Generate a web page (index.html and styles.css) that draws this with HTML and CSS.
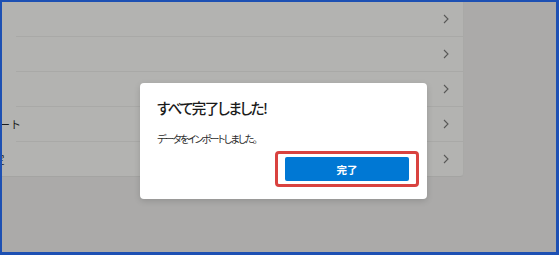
FILE: index.html
```html
<!DOCTYPE html>
<html lang="ja">
<head>
<meta charset="utf-8">
<link rel="stylesheet" href="styles.css">
</head>
<body>
<div class="screen">
  <div class="page">
    <div class="card">
      <div class="row"><span class="label"></span><svg class="chev" width="6" height="10" viewBox="0 0 6 10"><path d="M1 1l4 4-4 4" fill="none" stroke="#585857" stroke-width="1.1"/></svg></div>
      <div class="row"><span class="label"></span><svg class="chev" width="6" height="10" viewBox="0 0 6 10"><path d="M1 1l4 4-4 4" fill="none" stroke="#585857" stroke-width="1.1"/></svg></div>
      <div class="row"><span class="label"></span><svg class="chev" width="6" height="10" viewBox="0 0 6 10"><path d="M1 1l4 4-4 4" fill="none" stroke="#585857" stroke-width="1.1"/></svg></div>
      <div class="row"><span class="label">データのインポート</span><svg class="chev" width="6" height="10" viewBox="0 0 6 10"><path d="M1 1l4 4-4 4" fill="none" stroke="#585857" stroke-width="1.1"/></svg></div>
      <div class="row"><span class="label label-short">プロファイル設定</span><svg class="chev" width="6" height="10" viewBox="0 0 6 10"><path d="M1 1l4 4-4 4" fill="none" stroke="#585857" stroke-width="1.1"/></svg></div>
    </div>
  </div>
  <div class="dialog">
    <h2 class="title">すべて完了しました!</h2>
    <p class="message">データをインポートしました。</p>
    <div class="actions">
      <div class="highlight"><button class="done">完了</button></div>
    </div>
  </div>
  <div class="frame"></div>
</div>
</body>
</html>
```

FILE: styles.css
```css
html, body {
  margin: 0;
  padding: 0;
}
body {
  font-family: "Noto Sans CJK JP", "Noto Sans", sans-serif;
  background: #abaaa9;
}
.screen {
  position: relative;
  width: 559px;
  height: 255px;
  overflow: hidden;
  background: #abaaa9;
}
.page {
  padding-top: 1px;
}
.card {
  width: 543px;
  margin-left: -80px;
  background: #b3b3b1;
  border-right: 1px solid #a9a9a7;
  border-bottom: 1px solid #a4a4a2;
  border-radius: 0 0 4px 0;
}
.row {
  height: 34px;
  display: flex;
  align-items: center;
  justify-content: space-between;
  padding: 0 14px 0 0;
  margin-left: 96px;
  border-top: 1px solid #a9a9a7;
}
.row:first-child {
  border-top-color: transparent;
}
.label {
  margin-left: -94px;
  font-size: 11px;
  color: #1c1c1c;
  white-space: nowrap;
}
.label-short {
  letter-spacing: -0.8px;
}
.chev {
  display: block;
}
.dialog {
  position: absolute;
  left: 140px;
  top: 83px;
  width: 287px;
  height: 116px;
  box-sizing: border-box;
  padding: 15px 8px 12px 17px;
  background: #ffffff;
  border-radius: 4px;
  box-shadow: 0 2px 6px rgba(0, 0, 0, 0.15);
}
.title {
  margin: 0;
  font-size: 14.5px;
  line-height: 20px;
  font-weight: 500;
  letter-spacing: -1.6px;
  color: #1b1b1b;
  font-feature-settings: "palt";
}
.message {
  margin: 13px 0 0;
  font-size: 10px;
  line-height: 16px;
  letter-spacing: -1.7px;
  color: #2b2b2b;
  font-feature-settings: "palt";
}
.actions {
  display: flex;
  justify-content: flex-end;
  margin-top: 4px;
}
.highlight {
  padding: 3px 7px;
  border: 3px solid #d9423f;
  border-radius: 4px;
}
.done {
  display: block;
  width: 124px;
  height: 24px;
  padding: 0;
  border: 0;
  border-radius: 2px;
  background: #0078d4;
  color: #ffffff;
  font-family: "Noto Sans CJK JP", sans-serif;
  font-size: 10.5px;
  font-weight: 700;
}
.frame {
  position: absolute;
  inset: 0;
  border-style: solid;
  border-color: #1d50b3;
  border-width: 2px 3px 3px 2px;
  pointer-events: none;
}
```
